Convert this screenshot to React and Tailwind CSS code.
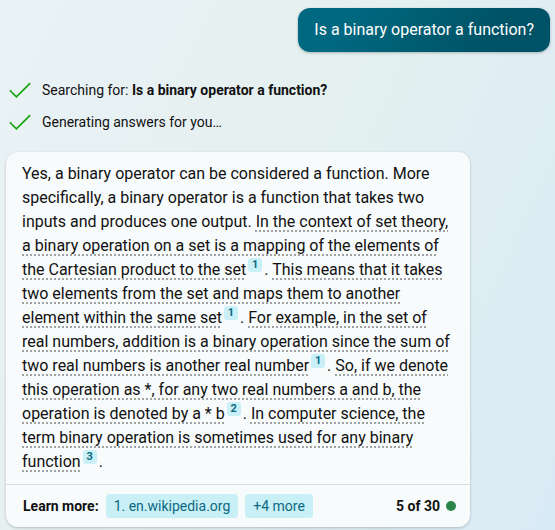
const Check = () => (
  <svg className="h-5 w-6 shrink-0" viewBox="0 0 24 20" fill="none" stroke="#13a10e" strokeWidth="1.6" aria-hidden="true">
    <path d="M1.8 10.3 8.4 16.9 22.2 3.1" />
  </svg>
);

const Cited = ({ children }) => (
  <a href="#sources" className="underline decoration-[#a0a2a4] decoration-dotted decoration-2 underline-offset-3">
    {children}
  </a>
);

const Cite = ({ n }) => (
  <sup className="top-0 mx-[2px] inline-block align-[7px] leading-none">
    <a href="#sources" className="block h-[14px] w-[14px] rounded-[3px] bg-[#c9eff7] text-center text-[11px] leading-[13px] font-bold text-[#0b6a82]">
      {n}
    </a>
  </sup>
);

const Step = ({ children }) => (
  <li className="flex h-8 items-center gap-[10px] text-sm">
    <Check />
    <span>{children}</span>
  </li>
);

export default function App() {
  return (
    <main className="min-h-screen bg-[linear-gradient(115deg,#e9f3f6_0%,#e6f0f1_35%,#e3f0f0_55%,#e0edf3_68%,#d9ebf5_100%)] pt-2 pr-[5px] pb-[3px] pl-[6px] font-['Roboto',sans-serif] text-[#111111]">
      <div className="flex justify-end">
        <p className="rounded-xl bg-[linear-gradient(120deg,#006880_20%,#005366_75%)] px-4 py-[10px] text-base leading-6 text-white shadow-[0_1px_3px_rgba(0,0,0,0.25)]">
          Is a binary operator a function?
        </p>
      </div>

      <ul className="mt-[22px] pl-[2px]">
        <Step>
          Searching for: <strong className="font-bold">Is a binary operator a function?</strong>
        </Step>
        <Step>Generating answers for you…</Step>
      </ul>

      <article className="mt-[14px] mr-20 rounded-xl bg-[#f8fbfc] shadow-[0_1px_3px_rgba(0,0,0,0.22)]">
        <p className="px-4 pt-[10px] pb-[10px] text-base leading-6">
          Yes, a binary operator can be considered a function. More specifically, a binary operator is a function that takes two inputs and produces one output.{" "}
          <Cited>In the context of set theory, a binary operation on a set is a mapping of the elements of the Cartesian product to the set</Cited>
          <Cite n="1" />.{" "}
          <Cited>This means that it takes two elements from the set and maps them to another element within the same set</Cited>
          <Cite n="1" />.{" "}
          <Cited>For example, in the set of real numbers, addition is a binary operation since the sum of two real numbers is another real number</Cited>
          <Cite n="1" />.{" "}
          <Cited>So, if we denote this operation as *, for any two real numbers a and b, the operation is denoted by a * b</Cited>
          <Cite n="2" />.{" "}
          <Cited>In computer science, the term binary operation is sometimes used for any binary function</Cited>
          <Cite n="3" />.
        </p>
        <footer id="sources" className="flex items-center gap-[7px] border-t border-[#d8dcde] py-[9px] pr-[14px] pl-[17px] text-sm leading-6">
          <span className="font-bold">Learn more:</span>
          <a href="#wikipedia" className="rounded bg-[#c9eff7] px-2 text-[#0b6a82]">1. en.wikipedia.org</a>
          <button type="button" className="rounded bg-[#c9eff7] px-2 text-[#0b6a82]">+4 more</button>
          <span className="ml-auto flex items-center gap-[6px] font-bold">
            5 of 30
            <span className="h-[10px] w-[10px] rounded-full bg-[#2b8649]" />
          </span>
        </footer>
      </article>
    </main>
  );
}
